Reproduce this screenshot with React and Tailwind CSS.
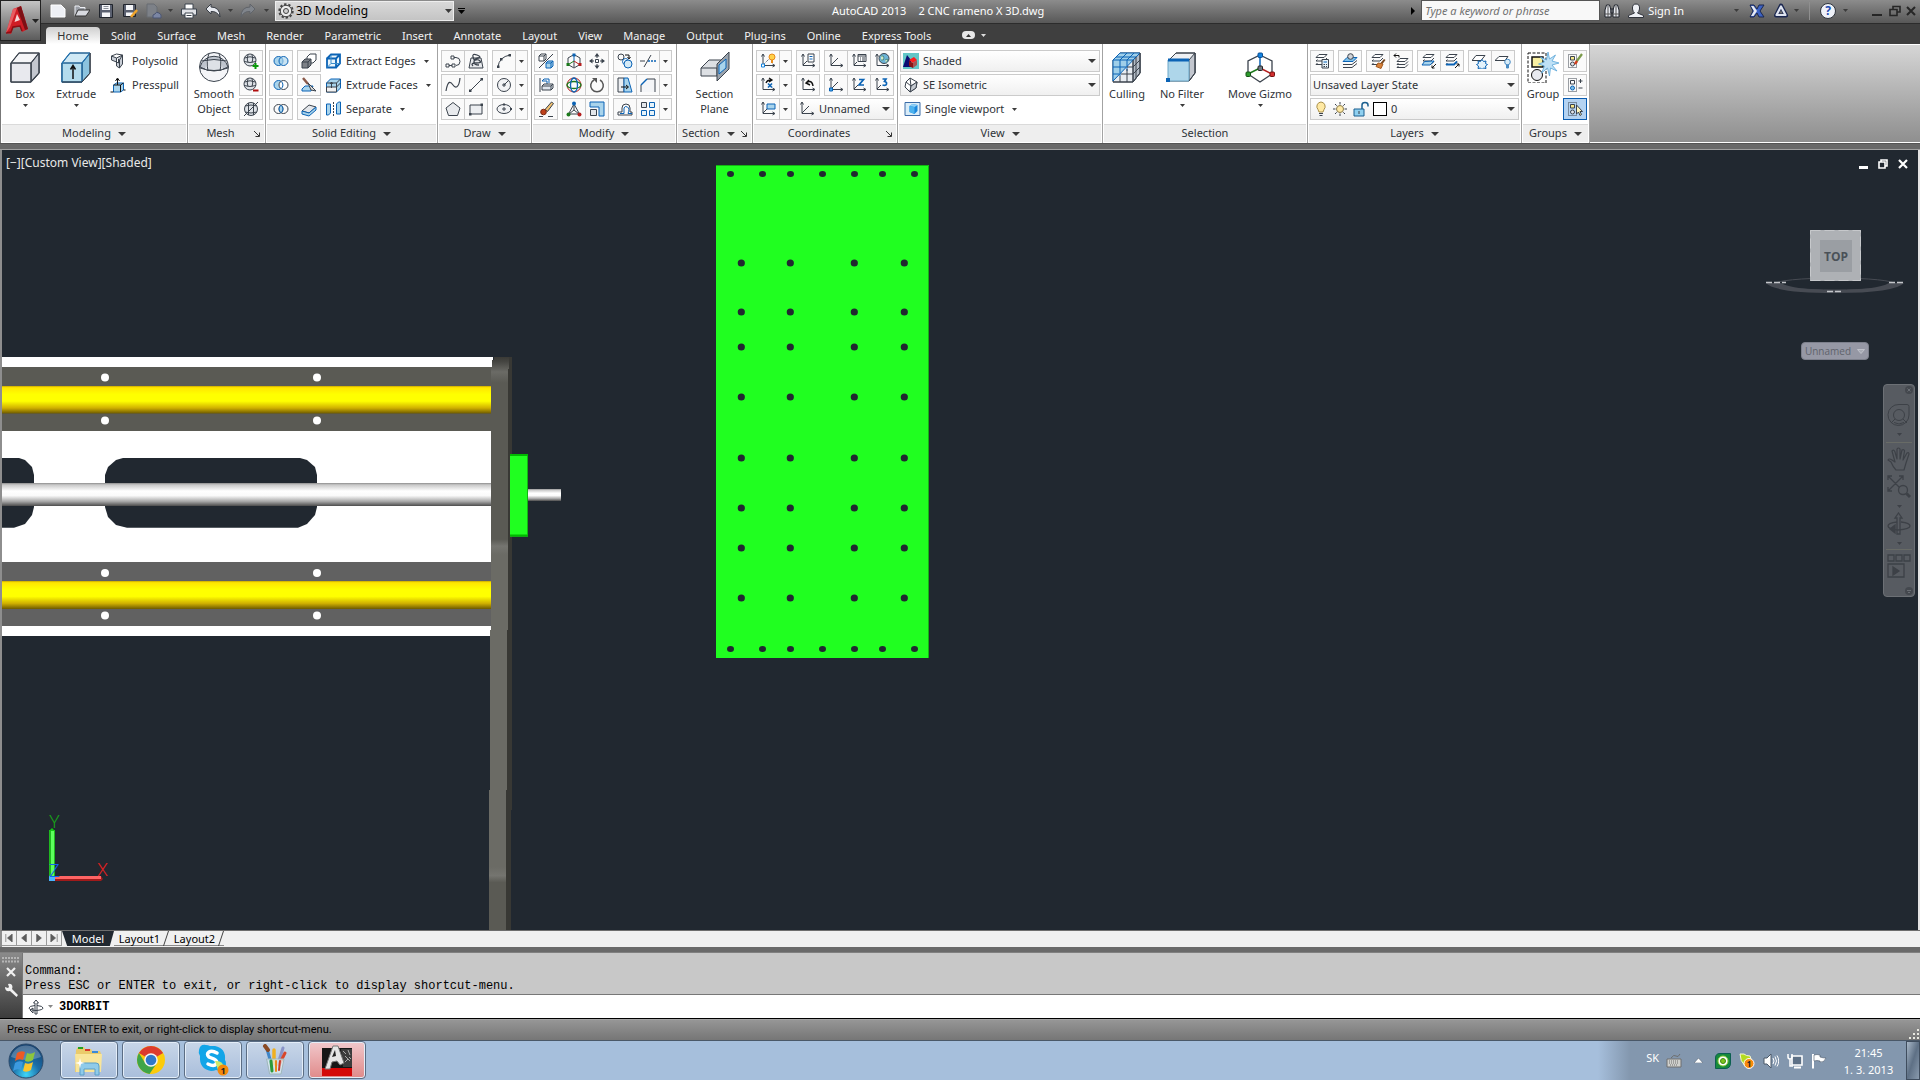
import React from 'react';

const INK = '#3b434d';
const BLUE = '#0b63b5';
const SKY = '#a9d4ec';

/* ---------- shared bits ---------- */

function Caret({ className = 'w-[7px] h-1 text-[#3a3a3a]' }) {
  return (
    <svg viewBox="0 0 8 4" preserveAspectRatio="none" className={`shrink-0 ${className}`} fill="currentColor">
      <path d="M0 0h8L4 4z" />
    </svg>
  );
}

function Icon({ children, className = 'w-4 h-4', box = 16 }) {
  return (
    <svg viewBox={`0 0 ${box} ${box}`} className={`shrink-0 ${className}`} fill="none" stroke={INK} strokeWidth="1">
      {children}
    </svg>
  );
}

const ucs = <path d="M3 1.500V12.500H14.500M1.500 3.500L3 1l1.500 2.500M12.500 11l2.500 1.500-2.500 1.500" />;
const dots = <rect x="1.500" y="1.500" width="8" height="13" strokeDasharray="1 1" />;
const layerStack = (
  <>
    <path d="M5 1.500h8l-3 3H2z" fill="#fff" />
    <path d="M3.500 6.500L2 8h8l3-3M3.500 10L2 11.500h8l3-3" />
  </>
);

const glyphs = {
  polysolid: (
    <>
      <path d="M2 3l5 2v4L2 7zM7 5l6-3v9l-3 4-3-2V9l2 1V6" fill="#c9ced6" />
      <path d="M2 3l5-2 6 1M10 15V7l3-5" />
    </>
  ),
  presspull: (
    <>
      <path d="M4 8l3-2h7v7l-3 2H4z" fill={SKY} stroke={BLUE} />
      <path d="M4 8h7v7M11 8l3-2M1 15h3M14 13h2M8 8V2M6 4l2-3 2 3" stroke="#111" />
    </>
  ),
  meshMore: (
    <>
      <circle cx="7" cy="7" r="6" fill="#dfe3e8" />
      <path d="M1.500 5q5.500-2.500 11 0M1 8.500q6 2 12 0M5 1.500q-1.500 5 0 8M9 1.500q1.500 5 0 8" />
      <path d="M12.500 10v6M9.500 13h6" stroke="#0a9a0a" strokeWidth="2" />
    </>
  ),
  meshLess: (
    <>
      <circle cx="7" cy="7" r="6" fill="#dfe3e8" />
      <path d="M1.500 5q5.500-2.500 11 0M1 8.500q6 2 12 0M5 1.500q-1.500 5 0 8M9 1.500q1.500 5 0 8" />
      <path d="M10 13.500h5.500" stroke="#b00c0c" strokeWidth="2" />
    </>
  ),
  refine: (
    <>
      <circle cx="8" cy="8" r="6.500" fill="#dfe3e8" />
      <path d="M1 15L15 1M2 5q6-2 12 0M2 11q6 2 12 0M5.500 2v12M10.500 2v12" />
    </>
  ),
  union: (
    <>
      <circle cx="5.500" cy="8" r="4.500" fill={SKY} stroke={BLUE} />
      <circle cx="10.500" cy="8" r="4.500" fill={SKY} fillOpacity=".6" stroke={BLUE} />
    </>
  ),
  subtract: (
    <>
      <circle cx="5.500" cy="8" r="4.500" fill={SKY} stroke={BLUE} />
      <circle cx="10.500" cy="8" r="4.500" fill="#fff" stroke={INK} />
      <path d="M8 4.300a4.500 4.500 0 0 1 0 7.400" stroke={BLUE} />
    </>
  ),
  intersect: (
    <>
      <circle cx="5.500" cy="8" r="4.500" />
      <circle cx="10.500" cy="8" r="4.500" />
      <path d="M8 4.300a4.500 4.500 0 0 1 0 7.400a4.500 4.500 0 0 1 0-7.400" fill={SKY} stroke={BLUE} />
    </>
  ),
  interfere: (
    <>
      <path d="M6 4l3-3h6v6l-3 3H6z" fill="#fff" />
      <path d="M1 9l3-3h6v6l-3 3H1z" fill="#7d8187" />
      <path d="M1 9h6v6M7 9l3-3" />
    </>
  ),
  slice: (
    <>
      <path d="M1 12l3-3h8l-2 5H1z" fill={SKY} stroke={BLUE} />
      <path d="M2 1l5 6" stroke="#8a5a4a" strokeWidth="2.500" />
      <path d="M7 6l8 8-5-1z" fill="#ddd" />
    </>
  ),
  thicken: (
    <>
      <path d="M1 10l7-6 7 2-7 6z" fill="#e3e6ea" />
      <path d="M1 10v3l7 2 7-6V6l-7 6z" fill={SKY} stroke={BLUE} />
    </>
  ),
  extractEdges: (
    <>
      <path d="M1.500 5.500h9v9h-9zM1.500 5.500l4-4h9v9l-4 4M10.500 5.500l4-4" fill="#eaf5fb" stroke={BLUE} strokeWidth="1.800" />
      <path d="M5.500 2v8.500H14M5.500 10.500l-4 4" stroke="#3d8ecb" />
    </>
  ),
  extrudeFaces: (
    <>
      <path d="M1 6l4-4h10v9l-4 4H1z" fill={SKY} stroke={BLUE} />
      <path d="M1 10h10v5H1z" fill="#f1f1f1" />
      <path d="M1 6h10v9M11 6l4-4M11 10l4-4M6 11V5M4.500 7L6 5l1.500 2" />
    </>
  ),
  separate: (
    <>
      <path d="M1 3h4v9l-2 2H1zM11 3l2-2h2v12h-4z" fill={SKY} stroke={BLUE} />
      <path d="M8 1v14" strokeDasharray="2 1" />
    </>
  ),
  polyline: (
    <>
      <path d="M2.500 12.500h6M8 4.500h3a4 4 0 0 1 0 8" />
      <path d="M1 11h3v3H1zM7 11h3v3H7zM6 3h3v3H6z" fill="#fff" />
    </>
  ),
  helix: (
    <>
      <path d="M3 5h10l2 10H1z" fill="#e8eaed" />
      <path d="M5 13q-3-3 3-3t4-2-4-1-3-3 4-2 1 3-4 4 5 3" strokeWidth="1.300" />
    </>
  ),
  arc: (
    <>
      <path d="M2 14Q3 4 14 2" />
      <path d="M1 12.500h2.500V15H1zM4 5h2.500v2.500H4zM12.500 1H15v2.500h-2.500z" fill={INK} stroke="none" />
    </>
  ),
  spline: <path d="M1 14C3 2 6 5 8 8s6 4 7-7" strokeWidth="1.200" />,
  line: (
    <>
      <path d="M2 14L14 2" />
      <path d="M1 12.500h2.500V15H1zM12.500 1H15v2.500h-2.500z" fill={INK} stroke="none" />
    </>
  ),
  circle: (
    <>
      <circle cx="8" cy="8" r="6.500" fill="#f2f3f5" />
      <path d="M8 8l4.500-4.500M6 8h4M8 6v4" />
    </>
  ),
  polygon: <path d="M8 1.500l7 5.500-2.500 7.500h-9L1 7z" fill="#e8eaed" />,
  rectangle: (
    <>
      <path d="M2 4h12v9H2z" fill="#eceef1" />
      <path d="M1 12h2.500v2.500H1zM12.500 2.500H15V5h-2.500z" fill={INK} stroke="none" />
    </>
  ),
  ellipse: (
    <>
      <ellipse cx="8" cy="8" rx="7" ry="4.500" fill="#f2f3f5" />
      <path d="M6 8h4M8 6v4" />
      <path d="M7 2.500h2v2H7zM14 7h2v2h-2z" fill={INK} stroke="none" />
    </>
  ),
  convert: (
    <>
      <path d="M1 3l2-2h5v5L6 8H1zM1 3h5v5M6 3l2-2" fill="#fff" />
      <path d="M8 10l2-2h5v5l-2 2H8zM8 10h5v5M13 10l2-2" fill={SKY} stroke={BLUE} />
      <path d="M1 15L15 1" />
    </>
  ),
  align3d: (
    <>
      <path d="M2 1v14" />
      <path d="M4 4l2-2h5v4M4 4h5v3" stroke={BLUE} />
      <path d="M4 9l2-2h9v4l-2 2H4zM4 9h9v4M13 9l2-2" fill="#dfe6ee" />
    </>
  ),
  erase: (
    <>
      <path d="M13.500 1l2 1.500-6 8-2.500-2z" fill="#f0c070" />
      <circle cx="5.500" cy="11" r="2.800" fill="#c0411c" stroke="#7a2a12" />
      <path d="M1 15.500h4M10 15.500h5" />
    </>
  ),
  move3d: (
    <>
      <path d="M8 1.500l6 3.500v6.500L8 15l-6-3.500V5zM8 8v6" />
      <path d="M8 8V2" stroke={BLUE} />
      <path d="M8 8l5.500 3.500" stroke="#b51f1f" />
      <path d="M8 8l-5.500 3.500" stroke="#1c7a1c" />
      <path d="M6.500 0.500h3v3h-3z" fill={BLUE} stroke="none" />
      <path d="M0.500 10h3v3h-3z" fill="#1c7a1c" stroke="none" />
      <path d="M12.500 10h3v3h-3z" fill="#b51f1f" stroke="none" />
    </>
  ),
  move: (
    <>
      <path d="M6.500 6.500h3v3h-3z" />
      <path d="M8 0l2.500 3.500h-5zM8 16l2.500-3.500h-5zM0 8l3.500-2.500v5zM16 8l-3.500-2.500v5z" fill={INK} stroke="none" />
      <path d="M8 3v2M8 11v2M3 8h2M11 8h2" />
    </>
  ),
  rotate3d: (
    <>
      <circle cx="8" cy="8" r="7" stroke="#b51f1f" />
      <ellipse cx="8" cy="8" rx="7" ry="3.500" stroke="#1c7a1c" strokeWidth="1.300" />
      <ellipse cx="8" cy="8" rx="3.500" ry="7" stroke={BLUE} strokeWidth="1.300" />
    </>
  ),
  rotate: (
    <>
      <path d="M11 3A6.300 6.300 0 1 1 5 3" strokeWidth="1.500" stroke="#555" />
      <path d="M3 1h5v5z" fill="#555" stroke="none" />
    </>
  ),
  scale3d: (
    <>
      <path d="M8 3L2.500 13h11z" />
      <path d="M8 2v7M8 9l-5 4M8 9l5 4" />
      <circle cx="8" cy="2.500" r="2" fill={BLUE} stroke="none" />
      <circle cx="2.500" cy="13.500" r="2" fill="#1c7a1c" stroke="none" />
      <circle cx="13.500" cy="13.500" r="2" fill="#b51f1f" stroke="none" />
    </>
  ),
  scale: (
    <>
      <path d="M1 1h14v14h-5V6H1z" fill={SKY} stroke={BLUE} />
      <path d="M1.500 8.500h6v6h-6z" fill="#e3e6ea" />
    </>
  ),
  copy: (
    <>
      <circle cx="4" cy="4" r="3" />
      <path d="M8 2h4v3M10.500 4L12 6l1.500-2" stroke="#111" />
      <circle cx="8.500" cy="8.500" r="3" stroke={BLUE} />
      <circle cx="11" cy="11" r="4" fill="#d5eaf6" stroke={BLUE} />
    </>
  ),
  trim: (
    <>
      <path d="M0 8h5M4 14L11 2" />
      <path d="M8 8h8" stroke={BLUE} strokeDasharray="2 1" strokeWidth="1.400" />
    </>
  ),
  stretch: (
    <>
      <path d="M1 1h6v14H1z" fill="#eceef1" />
      <path d="M7 1h4l4 14H7z" fill={SKY} stroke={BLUE} />
      <path d="M4 10h7M9 8l2.500 2L9 12" stroke="#111" />
    </>
  ),
  fillet: (
    <>
      <path d="M1 15V8l6-6h8v13" fill="#f4f5f7" />
      <path d="M1 8l6-6" stroke={BLUE} strokeWidth="1.400" />
    </>
  ),
  offset: (
    <>
      <path d="M1 14v-3h4V7a4 4 0 0 1 8 0v4h2v3z" />
      <path d="M3 12.500h4V7q1-2.500 3.500-1T11 12.500h4" stroke={BLUE} />
    </>
  ),
  array: (
    <>
      <path d="M1.500 1.500h5v5h-5z" fill="#e3e6ea" />
      <path d="M9.500 1.500h5v5h-5zM1.500 9.500h5v5h-5zM9.500 9.500h5v5h-5z" fill="#e6f3fa" stroke={BLUE} />
    </>
  ),
  ucsGizmo: (
    <>
      {ucs}
      <path d="M3 12l6-6" strokeDasharray="1 1" />
      <circle cx="12" cy="4" r="3" fill="#ffd24a" stroke="#e88a1a" />
      <path d="M11 7h2v3h-2z" fill="#e88a1a" stroke="none" />
      <path d="M1.500 11h3v3h-3z" fill="#fff" stroke="#1182e0" />
    </>
  ),
  ucsX: (
    <>
      {ucs}
      <path d="M6 6q1-3 5-3M9 1l3 2-3 2" stroke="#111" strokeWidth="1.300" />
      <path d="M8 6.500l4 4M12 6.500l-4 4" stroke={BLUE} strokeWidth="1.600" />
    </>
  ),
  ucsView: (
    <>
      {ucs}
      <path d="M7 3h8v5H7z" fill={SKY} stroke={BLUE} />
      <path d="M3 12l4-4" />
    </>
  ),
  ucsNamed: (
    <>
      {ucs}
      <path d="M8 1h6v8H8z" fill="#fff" />
      <path d="M9.500 3.500h3M9.500 6h3" stroke={BLUE} />
      <path d="M3 12l4-4" />
    </>
  ),
  ucsPrev: (
    <>
      {ucs}
      <path d="M6 6q6-4 7 3M9 3L6 6l4 2" stroke="#111" strokeWidth="1.400" />
    </>
  ),
  ucsWorldAxis: (
    <>
      {ucs}
      <path d="M3 12l7-7" />
    </>
  ),
  ucsList: (
    <>
      {ucs}
      <path d="M7 1.500h8v7H7z" fill="#fff" />
      <path d="M7 3h8M9 5h1M11 5h3M9 7h1M11 7h3M3 12l3-3" />
    </>
  ),
  ucsGlobe: (
    <>
      {ucs}
      <circle cx="10" cy="5.500" r="5" fill="#6cb4d8" />
      <path d="M7 3q3-1 3 2t-3 2M11 7q3-2 3 0l-2 3" fill="#cfe8c8" stroke="#4b8e87" />
    </>
  ),
  ucsOrigin: (
    <>
      {ucs}
      <path d="M3 12l7-7" />
      <path d="M1.500 11h3v3h-3z" fill="#49a7ee" stroke={BLUE} />
    </>
  ),
  ucsZ: (
    <>
      {ucs}
      <path d="M8 2.500h4.500L8 8h5" stroke={BLUE} strokeWidth="1.700" />
      <path d="M3 12l4-4" />
    </>
  ),
  ucs3: (
    <>
      {ucs}
      <path d="M8.500 2h3.500L10.500 4.500Q13 5 12.500 7T8.500 8" stroke={BLUE} strokeWidth="1.700" />
      <path d="M3 12l4-4" />
    </>
  ),
  shaded: (
    <>
      <rect width="16" height="16" fill="#62c7c7" stroke="none" />
      <path d="M0 14L4 2l4 5v7z" fill="#0b0b72" stroke="none" />
      <path d="M6 8l4 2v5l-4-2z" fill="#8b1515" stroke="none" />
      <path d="M6 7l5-3 3 3-4 3z" fill="#ff1c1c" stroke="none" />
      <path d="M10 10l4-3v5l-4 3z" fill="#a65252" stroke="none" />
    </>
  ),
  iso: (
    <>
      <path d="M7 1l7 4-1 6-6 4-5-5 1-5z" fill="#fff" />
      <path d="M3 5l5 4 6-4M8 9l-1 6M7 1l1 8" />
      <path d="M8 9l6-4-1 6-6 4z" fill="#c6cbd2" />
    </>
  ),
  viewport: (
    <>
      <path d="M0.500 1.500h15v13H0.500z" fill="#d9ecf8" stroke="#3b6ca8" />
      <path d="M5 5l3-2 5 1v6l-3 3-5-2z" fill="#1b86dc" stroke="none" />
      <path d="M5 5l5 1 3-2-5-1z" fill="#8fd1f7" stroke="none" />
      <path d="M5 5l5 1v7l-5-2z" fill="#4cb2ee" stroke="none" />
    </>
  ),
  layerProps: (
    <>
      {layerStack}
      <path d="M8 6.500h6.500V15H8z" fill="#e9f4fb" />
      <path d="M9.500 9h3.500" stroke={BLUE} />
      <path d="M9.500 11.500h1.500M12 11.500h1M9.500 13.500h1.500M12 13.500h1" />
    </>
  ),
  layerState: (
    <>
      <path d="M1 14.500h9l5-4M1 11.500h9l5-4" />
      <path d="M1 8.500l4-4h10l-4 4z" fill="#7fc1ea" stroke={BLUE} />
      <circle cx="8.500" cy="3.500" r="2.800" fill="#cfd3d8" />
    </>
  ),
  layerMatch: (
    <>
      {layerStack}
      <path d="M14 6l1.500 1-3 4-2-1z" fill="#7a4a22" stroke="none" />
      <path d="M8 10l5 1-2 4.500-5-2z" fill="#d9823a" stroke="#a35a1e" />
    </>
  ),
  layerPrev: (
    <>
      <path d="M7 5.500h8l-3 3H4z" fill="#fff" />
      <path d="M5.500 10L4 11.500h8l3-3M5.500 13L4 14.500h8l3-3" />
      <path d="M1 2.500h5v2M3 0.500L1 2.500l2 2" stroke="#111" />
    </>
  ),
  layerDown: (
    <>
      {layerStack}
      <path d="M3.500 8.500L1 12h8l4-4z" fill={SKY} stroke={BLUE} />
      <path d="M15 11l-4 4M11 12.500V15h2.500" stroke="#111" />
    </>
  ),
  layerUp: (
    <>
      {layerStack}
      <path d="M2 11.500h8l3-3" stroke={BLUE} strokeWidth="1.800" />
      <path d="M11 15l4-4M12.500 11H15v2.500" stroke="#111" />
    </>
  ),
  layerFreeze: (
    <>
      <path d="M4 2.500h9l-4 5H0z" fill="#fff" />
      <path d="M10 6.500l1.500 2 2.500-.5-.5 2.500 2 1-2 1.500.5 2.500-2.500-.5-1.500 1.500-1.500-1.500-2.500.5.500-2.500-2-1.500 2-1-.5-2.500 2.500.5z" fill="#e3f2fb" stroke={BLUE} />
    </>
  ),
  layerOff: (
    <>
      <path d="M4 3.500h9l-3 4H0z" fill="#fff" />
      <circle cx="12.500" cy="9" r="2.800" fill="#d8ecf8" stroke="#4a8cc4" />
      <path d="M11.500 12h2v3h-2z" fill="#4a8cc4" stroke="#4a8cc4" />
    </>
  ),
  bulb: (
    <>
      <path d="M8 1a4.500 4.500 0 0 1 3 7.500L10 11H6L5 8.500A4.500 4.500 0 0 1 8 1z" fill="#ffe9a3" stroke="#a9904a" />
      <path d="M6 12.500h4M6.500 14.500h3" />
    </>
  ),
  sun: (
    <>
      <circle cx="8" cy="8" r="3.500" fill="#ffe9a3" stroke="#8a7a4a" />
      <path d="M8 1v2.500M8 12.500V15M1 8h2.500M12.500 8H15M3 3l1.700 1.700M11.300 11.300L13 13M3 13l1.700-1.700M11.300 4.700L13 3" />
    </>
  ),
  lock: (
    <>
      <path d="M1 8h10v7H1z" fill="#8fd0f0" stroke="#1b5f8f" />
      <path d="M9 8V4q0-2.500 3-2.500t3 2.500v1.500" stroke="#1b5f8f" strokeWidth="1.500" />
      <path d="M6 10v3" />
    </>
  ),
  groupEdit: (
    <>
      {dots}
      <path d="M3.500 3.500h4v3.500h-4z" fill="#f7e88a" />
      <circle cx="5.500" cy="11" r="2" fill="#dfe3e8" />
      <path d="M15 1L9.500 8.500" stroke="#7a9a4a" strokeWidth="2.200" />
      <path d="M10 8L8 11" stroke="#d23c1a" strokeWidth="2.400" />
    </>
  ),
  groupAdd: (
    <>
      {dots}
      <path d="M3.500 3.500h4v3.500h-4z" fill="#fff" />
      <circle cx="5.500" cy="11" r="2" fill="#7fc1ea" stroke={BLUE} />
      <path d="M11.500 4h4M13.500 2v4M11.500 11h4" />
    </>
  ),
  groupPick: (
    <>
      {dots}
      <path d="M3.500 3.500h4v3.500h-4z" fill="#f7e88a" />
      <circle cx="5.500" cy="11" r="2" fill="#dfe3e8" />
      <path d="M9.500 4v9l2-2 1.500 3.500 1.500-1-1.500-3H15.500z" fill="#fff6c0" />
    </>
  ),
};

const bigGlyphs = {
  box: (
    <>
      <path d="M2 12l8-10h20v20l-8 9H2z" fill="#f4f5f7" />
      <path d="M22 12l8-10v20l-8 9z" fill="#c3c7cf" />
      <path d="M2 12h20v19H2z" fill="#e8e9ee" />
      <path d="M2 12l8-10h20v20l-8 9H2zM2 12h20v19M22 12l8-10" strokeWidth="1.200" />
    </>
  ),
  extrude: (
    <>
      <path d="M2 12l8-10h20v20l-8 9H2z" fill="#cfe9f5" />
      <path d="M22 12l8-10v20l-8 9z" fill="#8cc3de" />
      <path d="M2 12h20v19H2z" fill="#b4dced" />
      <path d="M2 12l8-10h20M2 12h20v19M22 12l8-10M2 12v19h20" stroke="#1a74b8" strokeWidth="1.200" />
      <path d="M2 31h20l8-9V2" />
      <path d="M13 28V15M10.500 18.500l2.500-4 2.500 4" stroke="#111" strokeWidth="1.500" />
    </>
  ),
  smooth: (
    <>
      <circle cx="16" cy="16" r="14.500" fill="#f4f5f8" />
      <path d="M2 16A14.500 14.500 0 0 1 30 16Q16 24 2 16z" fill="#bfc5ce" />
      <path d="M9 9h14l2 10H7z" fill="#dde1e6" stroke="none" />
      <path d="M3 10q13-3 26 0M2 17q14 5 28 0M11 2.500Q8 10 10 20M21 2.500Q24 10 22 20" />
    </>
  ),
  section: (
    <>
      <path d="M2 17l8-8h14v12l-5 4H2z" fill="#dde0e4" />
      <path d="M2 17h16M18 17v8" />
      <path d="M18 13L30 1v17L18 30z" fill="#9aa3ad" />
      <path d="M20 14l7-6v9l-7 6z" fill={SKY} stroke={BLUE} />
    </>
  ),
  culling: (
    <>
      <path d="M2 9l7-7h20v20l-7 9H2z" fill="#e9edf2" />
      <path d="M22 9l7-7v20l-7 9z" fill="#b5bdc7" />
      <path d="M2 30V9l7-7h20L2 30z" fill="#9fcfe9" stroke={BLUE} />
      <path d="M2 9h20M9 9v16M16 9v11M22 9l7-7M2 16h13M2 23h6M9 9l7-7M16 9l7-7M5 6h20" stroke={BLUE} />
      <path d="M22 9v22H2M9 25v6M16 18v13M22 16l7-7M22 23l7-7M10 23h12M16 16h6M25 6v21M29 2v20l-7 9" />
    </>
  ),
  filter: (
    <>
      <path d="M3 9l7-7h19v20l-6 8H3z" fill="#eef0f3" />
      <path d="M23 9l6-7v20l-6 8z" fill="#c3c7cf" />
      <path d="M2 9h21v21H2z" fill="#aed6ea" stroke="#6aa6c8" />
      <path d="M2 7.500h21v3H2zM0 27h4v4H0z" fill={BLUE} stroke="none" />
      <path d="M10 2h19v20l-6 8" />
    </>
  ),
  gizmo: (
    <>
      <path d="M16 4l12 6v13l-12 8-12-8V10z" strokeWidth="1.300" />
      <path d="M16 17V4" stroke={BLUE} strokeWidth="1.500" />
      <path d="M16 17L4 23" stroke="#1c7a1c" strokeWidth="1.500" />
      <path d="M16 17l12 6" stroke="#b51f1f" strokeWidth="1.500" />
      <rect x="14" y="2" width="4.500" height="4.500" rx="1" fill="#1182e0" stroke="#0a4f95" />
      <rect x="2" y="21" width="4.500" height="4.500" rx="1" fill="#2c9a2c" stroke="#145214" />
      <rect x="26" y="21" width="4.500" height="4.500" rx="1" fill="#d22f2f" stroke="#731010" />
      <rect x="14" y="15" width="4.500" height="4.500" rx="1" fill="#707a84" stroke="#222" />
    </>
  ),
  group: (
    <>
      <rect x="1" y="2" width="18" height="30" stroke="#111" strokeDasharray="3 1.500" />
      <path d="M5 6h11v10H5z" fill="#f8efa2" stroke="#111" strokeWidth="1.500" />
      <circle cx="10" cy="24" r="5.500" fill="#e8eaf0" stroke="#111" />
      <path d="M21 1l1.500 7 6-4-3.500 6 7 2-7 2 5 6-6.500-3-1 8-2-8-6 5 3-7-6-2 6-2-4-5 6 3z" fill="#bfe1f6" stroke="#5aa6d8" strokeWidth=".8" />
    </>
  ),
};

/* ---------- ribbon controls ---------- */

function Cell({ name, label, active = false }) {
  return (
    <button
      aria-label={label || name}
      className={`w-6 h-[22px] flex items-center justify-center border ${active ? 'border-[#0a5cb0] bg-[#b4d3f2]' : 'border-[#cbcbcb] bg-[#fafafa]'}`}
    >
      <Icon>{glyphs[name]}</Icon>
    </button>
  );
}

function Cells({ names, more = false }) {
  return (
    <div className="flex">
      {names.map((n, i) => (
        <div key={n} className={i > 0 ? '-ml-px flex' : 'flex'}>
          <Cell name={n} />
        </div>
      ))}
      {more && (
        <button aria-label="More" className="-ml-px w-[13px] h-[22px] flex items-center justify-center border border-[#cbcbcb] bg-[#fafafa]">
          <Caret className="w-[5px] h-[3px] text-[#3a3a3a]" />
        </button>
      )}
    </div>
  );
}

function Big({ name, lines, more = false, className = '' }) {
  return (
    <button className={`flex flex-col items-center shrink-0 ${className}`}>
      <Icon box={32} className="w-8 h-8 mb-[3px]">{bigGlyphs[name]}</Icon>
      {lines.map((l) => (
        <span key={l} className="leading-[15px] whitespace-nowrap">{l}</span>
      ))}
      {more && <Caret className="w-[5px] h-[3px] mt-[3px] text-[#3a3a3a]" />}
    </button>
  );
}

function Labeled({ name, text, more = false, gap = 'gap-1' }) {
  return (
    <button className={`h-[22px] flex items-center whitespace-nowrap ${gap}`}>
      <Icon className="w-[17px] h-4">{glyphs[name]}</Icon>
      <span>{text}</span>
      {more && <Caret className="w-[5px] h-[3px] ml-1 text-[#3a3a3a]" />}
    </button>
  );
}

function Combo({ label, value, children, pad = 'pl-[22px]' }) {
  return (
    <div className="relative h-[22px] w-full">
      <select
        aria-label={label}
        defaultValue={value}
        className={`appearance-none w-full h-full border border-[#cbcbcb] bg-gradient-to-b from-white to-[#f0f0f0] outline-none ${pad}`}
      >
        <option>{value}</option>
      </select>
      <span className="absolute inset-y-0 left-[3px] flex items-center gap-px pointer-events-none">{children}</span>
      <span className="absolute inset-y-0 right-[4px] flex items-center pointer-events-none">
        <Caret className="w-2 h-1 text-[#3a3a3a]" />
      </span>
    </div>
  );
}

function Panel({ title, width, children, more = false, launcher = false }) {
  return (
    <section className={`flex flex-col shrink-0 border-r border-[#a3a3a3] px-px pb-px ${width}`}>
      <div className="flex-1 flex items-start pt-1.5">{children}</div>
      <div className={`relative h-[18px] flex items-center justify-center gap-[7px] bg-[#eeeeee] border-t border-[#dadada] ${launcher ? 'pr-3' : ''}`}>
        <span>{title}</span>
        {more && <Caret className="w-2 h-1 text-[#3a3a3a]" />}
        {launcher && (
          <svg viewBox="0 0 6 6" className="absolute right-1 top-1.5 w-[6px] h-[6px]" stroke="#333" fill="none">
            <path d="M0 0l5 5M5.500 1.500v4h-4" />
          </svg>
        )}
      </div>
    </section>
  );
}

const Rows = ({ children, className = '' }) => <div className={`flex flex-col gap-0.5 ${className}`}>{children}</div>;
const Row = ({ children }) => <div className="flex gap-1">{children}</div>;

function Ribbon() {
  return (
    <div className="flex h-[99px] bg-white border-l border-[#777] text-[#2f3338] text-[11px]">
      <Panel title="Modeling" more width="w-[187px]">
        <Big name="box" lines={['Box']} more className="w-[46px] pt-px" />
        <Big name="extrude" lines={['Extrude']} more className="w-[56px] pt-px" />
        <Rows className="pl-[5px]">
          <Labeled name="polysolid" text="Polysolid" gap="gap-1.5" />
          <Labeled name="presspull" text="Presspull" gap="gap-1.5" />
        </Rows>
      </Panel>
      <Panel title="Mesh" launcher width="w-[78px]">
        <Big name="smooth" lines={['Smooth', 'Object']} className="w-[50px] pt-px" />
        <Rows>
          <Cell name="meshMore" />
          <Cell name="meshLess" />
          <Cell name="refine" />
        </Rows>
      </Panel>
      <Panel title="Solid Editing" more width="w-[172px]">
        <Rows className="pl-0.5">
          <Row><Cell name="union" /><Cell name="interfere" /></Row>
          <Row><Cell name="subtract" /><Cell name="slice" /></Row>
          <Row><Cell name="intersect" /><Cell name="thicken" /></Row>
        </Rows>
        <Rows className="pl-1">
          <Labeled name="extractEdges" text="Extract Edges" more />
          <Labeled name="extrudeFaces" text="Extrude Faces" more />
          <Labeled name="separate" text="Separate" more />
        </Rows>
      </Panel>
      <Panel title="Draw" more width="w-[94px]">
        <Rows className="pl-0.5">
          <Row><Cells names={['polyline', 'helix']} /><Cells names={['arc']} more /></Row>
          <Row><Cells names={['spline', 'line']} /><Cells names={['circle']} more /></Row>
          <Row><Cells names={['polygon', 'rectangle']} /><Cells names={['ellipse']} more /></Row>
        </Rows>
      </Panel>
      <Panel title="Modify" more width="w-[145px]">
        <Rows className="pl-px">
          <Row><Cell name="convert" /><Cells names={['move3d', 'move']} /><Cells names={['copy', 'trim']} more /></Row>
          <Row><Cell name="align3d" /><Cells names={['rotate3d', 'rotate']} /><Cells names={['stretch', 'fillet']} more /></Row>
          <Row><Cell name="erase" /><Cells names={['scale3d', 'scale']} /><Cells names={['offset', 'array']} more /></Row>
        </Rows>
      </Panel>
      <Panel title="Section" more launcher width="w-[76px]">
        <Big name="section" lines={['Section', 'Plane']} className="w-full pt-px" />
      </Panel>
      <Panel title="Coordinates" launcher width="w-[145px]">
        <Rows className="pl-0.5">
          <Row><Cells names={['ucsGizmo']} more /><Cell name="ucsNamed" /><Cells names={['ucsWorldAxis', 'ucsList', 'ucsGlobe']} /></Row>
          <Row><Cells names={['ucsX']} more /><Cell name="ucsPrev" /><Cells names={['ucsOrigin', 'ucsZ', 'ucs3']} /></Row>
          <Row>
            <Cells names={['ucsView']} more />
            <div className="flex-1"><Combo label="Named UCS" value="Unnamed"><Icon>{glyphs.ucsWorldAxis}</Icon></Combo></div>
          </Row>
        </Rows>
      </Panel>
      <Panel title="View" more width="w-[205px]">
        <Rows className="w-full px-px">
          <Combo label="Visual style" value="Shaded"><Icon>{glyphs.shaded}</Icon></Combo>
          <Combo label="View" value="SE Isometric"><Icon>{glyphs.iso}</Icon></Combo>
          <div className="pl-1"><Labeled name="viewport" text="Single viewport" more /></div>
        </Rows>
      </Panel>
      <Panel title="Selection" width="w-[205px]">
        <Big name="culling" lines={['Culling']} className="w-[46px] pt-px" />
        <Big name="filter" lines={['No Filter']} more className="w-16 pt-px" />
        <Big name="gizmo" lines={['Move Gizmo']} more className="w-[92px] pt-px" />
      </Panel>
      <Panel title="Layers" more width="w-[214px]">
        <Rows className="w-full px-px">
          <Row>
            <Cell name="layerProps" />
            <Cell name="layerState" />
            <Cells names={['layerMatch', 'layerPrev']} />
            <Cells names={['layerDown', 'layerUp']} />
            <Cells names={['layerFreeze', 'layerOff']} />
          </Row>
          <Combo label="Layer state" value="Unsaved Layer State" pad="pl-0.5" />
          <Combo label="Layer" value="0" pad="pl-20">
            <Icon>{glyphs.bulb}</Icon>
            <Icon className="w-5 h-4">{glyphs.sun}</Icon>
            <Icon className="w-5 h-4">{glyphs.lock}</Icon>
            <span className="w-[14px] h-[14px] ml-px border border-black bg-white" />
          </Combo>
        </Rows>
      </Panel>
      <Panel title="Groups" more width="w-[68px]">
        <Big name="group" lines={['Group']} className="w-10 pt-px" />
        <Rows>
          <Cell name="groupEdit" />
          <Cell name="groupAdd" />
          <Cell name="groupPick" active />
        </Rows>
      </Panel>
      <div className="flex-1 border-y border-white bg-gradient-to-b from-[#d6d6d6] to-[#8f8f8f]" />
    </div>
  );
}

/* ---------- title bar ---------- */

const quick = {
  New: <path d="M1 2h10l4 4v8H1z" fill="#eef0f5" stroke="#fff" />,
  Open: (
    <>
      <path d="M1 13V3h4l1 1.500h5V7" fill="#9a9ea6" stroke="#eef0f5" />
      <path d="M1 13L4 7h12l-4 6z" fill="#d8dae0" stroke="#333" />
    </>
  ),
  Save: (
    <>
      <path d="M1.500 1.500h13v13h-13z" fill="#5a6070" stroke="#20242c" />
      <path d="M4 2h8v5H4zM4 9.500h8V14H4z" fill="#f4f5f8" stroke="none" />
      <path d="M5.500 3.500h5M5.500 5.500h5" stroke="#8a8f98" />
    </>
  ),
  'Save As': (
    <>
      <path d="M1.500 1.500h12v12h-12z" fill="#5a6070" stroke="#20242c" />
      <path d="M4 2h7v5H4zM4 9.500h7V13H4z" fill="#f4f5f8" stroke="none" />
      <path d="M15 7l-6 7" stroke="#f0a52c" strokeWidth="2.600" />
    </>
  ),
  Export: (
    <>
      <path d="M1 1h7l3 3v10H1z" fill="#7d8188" stroke="#686c73" />
      <path d="M7 15q-1-4 2-4 1-3 4-1 3 1 2 5z" fill="#7b86a4" stroke="#4a5470" />
    </>
  ),
};

const dimCaret = 'w-[5px] h-[3px] text-[#3c3c3c]';

function QuickButton({ label, children }) {
  return (
    <button aria-label={label} className="w-6 h-5 flex items-center justify-center">
      <Icon>{children}</Icon>
    </button>
  );
}

function TitleBar() {
  return (
    <div className="h-6 flex items-center bg-gradient-to-b from-[#8c8c8c] to-[#585858] border-b border-[#2c2c2c] text-white text-[11px]">
      <div className="flex items-center pl-[46px] pb-0.5">
        {Object.keys(quick).map((k) => (
          <QuickButton key={k} label={k}>{quick[k]}</QuickButton>
        ))}
        <Caret className={`${dimCaret} ml-0.5 mr-1`} />
        <QuickButton label="Plot">
          <path d="M4 6V1h8v5" fill="#fff" />
          <path d="M0.500 6h15v6h-15z" fill="#dfe1e6" />
          <path d="M4 10h8v5H4z" fill="#fff" />
          <path d="M5.500 12.500h5" />
        </QuickButton>
        <QuickButton label="Undo">
          <path d="M1 6l5-5v3q9 0 9 10-3-6-9-5.500V11z" fill="#e6e9ef" stroke="#3a3f47" />
        </QuickButton>
        <Caret className={`${dimCaret} mx-[3px]`} />
        <QuickButton label="Redo">
          <path d="M15 6l-5-5v3q-9 0-9 10 3-6 9-5.500V11z" fill="#80858c" stroke="#60646a" />
        </QuickButton>
        <Caret className={`${dimCaret} mx-1`} />
        <div className="relative w-[179px] h-5 ml-0.5">
          <select aria-label="Workspace" defaultValue="3D Modeling" className="appearance-none w-full h-full pl-5 bg-gradient-to-b from-[#d9d9d9] to-[#c4c4c4] border border-[#eee] text-black text-[12px] outline-none">
            <option>3D Modeling</option>
          </select>
          <svg viewBox="0 0 16 16" className="absolute left-[3px] top-0.5 w-4 h-4 pointer-events-none" fill="none" stroke="#444">
            <circle cx="8" cy="8" r="6.800" strokeDasharray="2.400 1.870" strokeWidth="1.800" />
            <circle cx="8" cy="8" r="5.700" fill="#ececec" />
            <circle cx="8" cy="8" r="2.500" fill="#d0d0d0" />
          </svg>
          <span className="absolute right-[2px] top-2 pointer-events-none"><Caret /></span>
        </div>
        <button aria-label="Customize quick access" className="flex flex-col items-center gap-px ml-1">
          <span className="w-[7px] h-px bg-black" />
          <Caret className="w-[7px] h-1 text-black" />
        </button>
      </div>
      <h1 className="flex-1 flex justify-center gap-3 whitespace-pre">
        <span>AutoCAD 2013</span>
        <span>2 CNC rameno X 3D.dwg</span>
      </h1>
      <div className="flex items-center shrink-0 pb-0.5">
        <svg viewBox="0 0 4 8" className="w-1 h-2 mr-1.5"><path d="M0 0l4 4-4 4z" /></svg>
        <input aria-label="Search" placeholder="Type a keyword or phrase" className="w-[179px] h-[21px] px-[3px] bg-[#f8f8f8] border border-[#555] italic placeholder:text-[#707070] text-black outline-none" />
        <button aria-label="Find" className="ml-1 flex">
          <Icon>
            <path d="M1 14V7l1.500-5h3L7 7v7zM9 14V7l1.500-5h3L15 7v7zM7 6h2v4H7z" fill="#e6e8ee" stroke="#20242c" />
            <path d="M1 11h6M9 11h6M4 3v11M12 3v11" stroke="#555" />
          </Icon>
        </button>
        <button className="ml-2 flex items-center gap-1">
          <Icon>
            <path d="M8 1q4 0 3.500 5-.5 3-2 4l6 2.500v2H.5v-2l6-2.500q-1.500-1-2-4Q4 1 8 1z" fill="#eef0f5" stroke="#30343c" />
          </Icon>
          <span className="pt-0.5">Sign In</span>
        </button>
        <Caret className={`${dimCaret} ml-[50px] mr-2.5`} />
        <button aria-label="Exchange" className="flex">
          <Icon>
            <path d="M1 2h4l3 4 2-4h5l-4 6 4 6h-5L8 10l-3 4H1l3-6z" fill="#3c62c4" stroke="#1b2750" />
            <path d="M2 3h2.500L8 8l-3.500 5H2l3-5z" fill="#e8ebf2" stroke="none" />
          </Icon>
        </button>
        <button aria-label="Stay connected" className="flex items-center gap-[5px] ml-2">
          <Icon>
            <path d="M8 2.500L13 12.500H3z" strokeWidth="4" stroke="#1b2750" strokeLinejoin="round" />
            <path d="M8 3.500L12.500 12H3.500z" strokeWidth="2.200" stroke="#dfe4f0" strokeLinejoin="round" />
          </Icon>
          <Caret className={dimCaret} />
        </button>
        <span className="w-px h-[18px] bg-[#8f8f8f] mx-2.5" />
        <button aria-label="Help" className="flex items-center gap-[7px]">
          <span className="w-4 h-4 rounded-full bg-[#eef1f8] border border-[#30343c] text-[#1c49b0] font-bold text-[12px] leading-[14px] text-center">?</span>
          <Caret className={dimCaret} />
        </button>
        <button aria-label="Minimize" className="ml-6 w-[17px] h-5 flex items-center">
          <span className="w-2.5 h-[2px] bg-[#262626] mt-2" />
        </button>
        <button aria-label="Restore" className="w-[17px] flex">
          <svg viewBox="0 0 12 12" className="w-3 h-3" fill="none" stroke="#262626" strokeWidth="1.600"><path d="M4 4V1.500h7V7H8M1 4.500h7v6H1z" /></svg>
        </button>
        <button aria-label="Close" className="w-[14px] flex">
          <svg viewBox="0 0 10 10" className="w-2.5 h-2.5" stroke="#262626" strokeWidth="2"><path d="M1 1l8 8M9 1L1 9" /></svg>
        </button>
      </div>
    </div>
  );
}

const tabs = ['Home', 'Solid', 'Surface', 'Mesh', 'Render', 'Parametric', 'Insert', 'Annotate', 'Layout', 'View', 'Manage', 'Output', 'Plug-ins', 'Online', 'Express Tools'];

function TabBar() {
  return (
    <nav className="h-5 flex items-end gap-px bg-[#3f3f3f] pl-[46px] text-[11px] text-[#f2f2f2]">
      {tabs.map((t) => (
        <button
          key={t}
          className={`h-[17px] leading-[15px] whitespace-nowrap ${t === 'Home' ? 'w-[54px] text-[#333] bg-gradient-to-b from-[#cfcfcf] to-white rounded-t-sm' : 'px-[10px]'}`}
        >
          {t}
        </button>
      ))}
      <button aria-label="Minimize ribbon" className="flex items-center gap-1.5 ml-5 mb-[5px]">
        <span className="w-[13px] h-2 rounded-sm bg-[#e8e8e8] flex items-center justify-center">
          <Caret className="w-[5px] h-[3px] rotate-180 text-[#333]" />
        </span>
        <Caret className="w-[5px] h-[3px] text-[#ddd]" />
      </button>
    </nav>
  );
}

/* ---------- model space ---------- */

const plateEdgeX = [730, 762, 790, 822, 854, 882, 914];
const plateX = [741, 790, 854, 904];
const plateY = [263, 312, 347, 397, 458, 508, 548, 598];

function Model() {
  return (
    <svg viewBox="2 150 1916 780" preserveAspectRatio="xMinYMin slice" className="absolute inset-0 w-full h-full">
      <defs>
        <linearGradient id="gold" x1="0" y1="0" x2="0" y2="1">
          <stop offset="0" stopColor="#c9a800" />
          <stop offset=".06" stopColor="#ffe600" />
          <stop offset=".3" stopColor="#ffff00" />
          <stop offset=".55" stopColor="#ffff00" />
          <stop offset=".8" stopColor="#d0b000" />
          <stop offset="1" stopColor="#6e5a00" />
        </linearGradient>
        <linearGradient id="steel" x1="0" y1="0" x2="0" y2="1">
          <stop offset="0" stopColor="#8c8c8c" />
          <stop offset=".08" stopColor="#c8c8c8" />
          <stop offset=".35" stopColor="#ffffff" />
          <stop offset=".55" stopColor="#fafafa" />
          <stop offset=".8" stopColor="#a8a8a8" />
          <stop offset="1" stopColor="#4c4c4c" />
        </linearGradient>
        <linearGradient id="post" gradientUnits="userSpaceOnUse" x1="0" y1="357" x2="0" y2="930">
          <stop offset="0" stopColor="#3a3a36" />
          <stop offset=".008" stopColor="#454541" />
          <stop offset=".026" stopColor="#6b6b66" />
          <stop offset=".045" stopColor="#5a5a54" />
          <stop offset=".318" stopColor="#5a5a54" />
          <stop offset=".33" stopColor="#757570" />
          <stop offset=".345" stopColor="#6b6b65" />
          <stop offset=".89" stopColor="#6b6b65" />
          <stop offset=".905" stopColor="#757570" />
          <stop offset=".917" stopColor="#5a5a54" />
          <stop offset="1" stopColor="#5a5a54" />
        </linearGradient>
      </defs>

      {/* rails and carriage plate */}
      <path d="M2 357H493V636H2z" fill="#fff" />
      <path d="M2 367H491V431H2z" fill="#5a5a54" />
      <path d="M2 562H491V626H2z" fill="#616161" />
      <rect x="2" y="386" width="489" height="27.500" fill="url(#gold)" />
      <rect x="2" y="581" width="489" height="28" fill="url(#gold)" />
      {[377.5, 420.5, 573, 615.5].map((y) => [105, 317].map((x) => <circle key={`${x}-${y}`} cx={x} cy={y} r="4" fill="#fff" />))}
      <path d="M123 458H300L307 460 315 467 317 475V507L315 515 307 524 298 527.700H127L116 525 108 517 105 507V475L108 467 116 460z" fill="#212830" />
      <path d="M2 458H19L25 460 32 467 34 475V507L32 515 25 524 14 527.700H2z" fill="#212830" />
      <rect x="2" y="483" width="489" height="23" fill="url(#steel)" />

      {/* upright */}
      <path d="M494 357H512V810H511V930H503V400H494z" fill="#383834" />
      <path d="M494 357H509V369H508V630H507V790H506V930H489V790H490V630H491V367H492V360H494z" fill="url(#post)" />
      <path d="M510 454H528V536.500H510z" fill="#20ff20" />
      <path d="M510 454h18v2h-18zM510 534.500h18v2h-18z" fill="#00b800" />
      <path d="M527.500 456V535" stroke="#12b512" />
      <rect x="528" y="489" width="33" height="12" fill="url(#steel)" />

      {/* drilled plate */}
      <rect x="716" y="165" width="213" height="493" fill="#20ff20" />
      <path d="M716 165.500H928.500V658" stroke="#12b512" fill="none" />
      {[174, 649].map((y) => plateEdgeX.map((x) => <ellipse key={`${x}-${y}`} cx={x + 0.5} cy={y} rx="3.500" ry="3" fill="#212830" />))}
      {plateY.map((y) => plateX.map((x) => <circle key={`${x}-${y}`} cx={x + 0.3} cy={y} r="3.600" fill="#212830" />))}

      {/* UCS icon */}
      <rect x="49" y="830" width="6" height="49" fill="#1fb81f" />
      <rect x="51" y="830" width="3" height="49" fill="#5dff5d" />
      <path d="M49 831l3-3 3 3z" fill="#12c812" />
      <rect x="54" y="876" width="47" height="3" fill="#ff6464" />
      <path d="M54 879h47v2H54zM101 876l2 3-2 2z" fill="#a01a1a" />
      <rect x="49" y="876" width="6" height="5" fill="#48b4ff" />
      <g className="font-['Roboto'] font-light text-[18px]">
        <text x="49" y="828" fill="#18a018">Y</text>
        <text x="97" y="876" fill="#e02020">X</text>
        <text x="49" y="877" fill="#1560f0">Z</text>
      </g>
    </svg>
  );
}

function ViewCube() {
  return (
    <div className="absolute right-[13px] top-20 w-[140px] flex flex-col items-center font-['Open_Sans',sans-serif]">
      <svg viewBox="0 0 140 64" className="w-[140px] h-16">
        <ellipse cx="70" cy="54" rx="60" ry="6" fill="none" stroke="#474b53" strokeWidth="1" />
        <path d="M1 53Q10 63 70 63T139 53L124 53Q112 60 70 60T16 53z" fill="#474b53" />
        <path d="M1 52.500h20M124 52.500h14M62 61.500h16" stroke="#c4c6ca" strokeWidth="1.500" strokeDasharray="6 2" />
        <rect x="45" y="0" width="51" height="51" fill="#aeb1b5" />
        <rect x="45.500" y=".5" width="50" height="50" fill="none" stroke="#c6c8cb" strokeDasharray="10 4" />
        <rect x="55" y="10" width="32" height="32" fill="#9a9ea3" />
        <text x="71" y="31" textAnchor="middle" fill="#4a5158" className="text-[12px] font-bold">TOP</text>
      </svg>
      <button className="mt-12 w-[68px] h-[18px] rounded-[4px] border border-[#7d808c] bg-[#9698a5] text-[#5f636c] text-[10px] leading-4 flex items-center justify-center gap-1.5">
        <span>Unnamed</span>
        <svg viewBox="0 0 8 5" className="w-2 h-[5px]" fill="#a9acb6" stroke="#c0c2cb"><path d="M.5.5h7L4 4.500z" /></svg>
      </button>
    </div>
  );
}

function NavBar() {
  const tool = 'w-6 h-6';
  return (
    <div className="absolute right-[3px] top-[234px] w-8 h-[213px] rounded-[4px] border border-[#6c7075] bg-[#575b61] flex flex-col items-center pt-[18px] text-[#3d4147]">
      <svg viewBox="0 0 8 8" className="absolute top-px right-px w-2 h-2" fill="#44484e" stroke="#696d73"><circle cx="4" cy="4" r="4" stroke="none" /><path d="M2.500 2.500l3 3M5.500 2.500l-3 3" /></svg>
      <button aria-label="Steering wheel">
        <svg viewBox="0 0 24 24" className={tool} fill="none" stroke="currentColor">
          <path d="M12 1.500h8q2 0 2 2V12a10.500 10.500 0 1 1-10-10.500z" />
          <circle cx="12" cy="12" r="5.500" />
          <path d="M8 16l-4 4M16 16l4 4M7 19.500q5 3 10 0" />
        </svg>
      </button>
      <Caret className="w-[5px] h-[3px] mt-1.5" />
      <span className="w-[26px] h-px bg-[#686b66] mt-1.5 mb-1" />
      <button aria-label="Pan">
        <svg viewBox="0 0 24 24" className={tool} fill="none" stroke="currentColor" strokeWidth="1.200" strokeLinejoin="round">
          <path d="M9 23q-3-3-5-8l-3-2q1-2 4 0l3 2L5 4q2-2 3 1l2 7V2q1.500-2 3 0v10l2-9q2-1 2.500 1L16 13l4-7q2-1 2 1l-3 9-2 7z" />
        </svg>
      </button>
      <button aria-label="Zoom extents" className="mt-1">
        <svg viewBox="0 0 24 24" className={tool} fill="none" stroke="currentColor" strokeWidth="1.300">
          <path d="M1 1l15 15M16 1L1 16M1 5V1h4M12 1h4v4M1 12v4h4" />
          <circle cx="16" cy="15" r="4.500" fill="#575b61" />
          <path d="M19.500 18.500L23 22" strokeWidth="3" />
        </svg>
      </button>
      <Caret className="w-[5px] h-[3px] mt-1.5" />
      <button aria-label="Orbit" className="mt-1">
        <svg viewBox="0 0 24 24" className={tool} fill="none" stroke="currentColor" strokeWidth="1.300">
          <path d="M10 22V6H8l3.500-5L15 6h-2v16z" />
          <path d="M10 10Q1 11 1 14t10 4q12-1 12-4t-9-4" />
          <path d="M3 17l5-4v8z" fill="currentColor" />
        </svg>
      </button>
      <Caret className="w-[5px] h-[3px] mt-1.5" />
      <span className="w-[26px] h-px bg-[#686b66] my-1" />
      <button aria-label="Show motion">
        <svg viewBox="0 0 24 24" className={tool} fill="none" stroke="currentColor" strokeWidth="1.300">
          <path d="M1 1h6v6H1zM9 1h6v6H9zM17 1h6v6h-6zM1 10h16v13H1z" />
          <path d="M6 13l6 4-6 4z" fill="currentColor" />
        </svg>
      </button>
      <svg viewBox="0 0 8 8" className="absolute bottom-px right-px w-2 h-2" fill="#44484e" stroke="#696d73"><circle cx="4" cy="4" r="4" stroke="none" /><path d="M2 3.500h4M3 5.500h2" /></svg>
    </div>
  );
}

function Viewport() {
  return (
    <main className="relative flex-1 min-h-0 overflow-hidden bg-[#212830] border-l-2 border-r-2 border-l-[#8e8e8e] border-r-[#e4e4e4]">
      <Model />
      <div className="relative flex justify-between items-start pl-1 pr-[10px] pt-1 text-[#e8e8e8] text-[12px]">
        <span>[−][Custom View][Shaded]</span>
        <div className="flex items-center gap-2.5 pt-[5px]">
          <button aria-label="Minimize drawing" className="h-2.5 flex items-end"><span className="w-[9px] h-[3px] bg-white" /></button>
          <button aria-label="Restore drawing">
            <svg viewBox="0 0 10 10" className="w-2.5 h-2.5" fill="none" stroke="#fff" strokeWidth="1.600"><path d="M3 2.500V1h6v6H7.500M1 3h6v6H1z" /></svg>
          </button>
          <button aria-label="Close drawing">
            <svg viewBox="0 0 10 10" className="w-2.5 h-2.5" stroke="#fff" strokeWidth="2.200"><path d="M1 1l8 8M9 1L1 9" /></svg>
          </button>
        </div>
      </div>
      <ViewCube />
      <NavBar />
    </main>
  );
}

/* ---------- bottom bars ---------- */

const navArrows = [
  ['First', 'M1 0v10M9 0v10L3 5z'],
  ['Previous', 'M8 0v10L2 5z'],
  ['Next', 'M2 0v10l6-5z'],
  ['Last', 'M9 0v10M1 0v10l6-5z'],
];

function LayoutTabs() {
  return (
    <div className="h-[17px] flex items-start bg-[#f0f0f0] border-t border-[#6d6d6d] border-l-2 border-l-[#8e8e8e] text-[11px]">
      {navArrows.map(([label, d]) => (
        <button key={label} aria-label={label} className="w-[15px] h-[15px] flex items-center justify-center border-r border-b border-[#9a9a9a]">
          <svg viewBox="0 0 10 10" className="w-2 h-2" fill="#5c5c5c" stroke="#5c5c5c" strokeWidth=".8"><path d={d} /></svg>
        </button>
      ))}
      <button className="h-[15px] w-[52px] bg-[#212830] text-white leading-[13px] [clip-path:polygon(0_0,100%_0,92%_100%,10%_100%)]">Model</button>
      {['Layout1', 'Layout2'].map((t) => (
        <button key={t} className="relative h-[15px] w-[55px] pr-1 leading-[13px] text-black border-b border-[#8a8a8a]">
          {t}
          <svg viewBox="0 0 6 15" className="absolute right-0 top-0 w-1.5 h-[15px]" stroke="#444" fill="none"><path d="M5.500 0L.5 15" /></svg>
        </button>
      ))}
    </div>
  );
}

function CommandLine() {
  return (
    <div className="flex h-[67px] bg-[#c8c8c8] border-t border-[#808080] border-b border-b-black font-['Liberation_Mono','DejaVu_Sans_Mono',monospace] text-[12px] text-black">
      <div className="w-[23px] shrink-0 flex flex-col items-center bg-gradient-to-b from-[#8a8a8a] to-[#3c3c3c] border-r border-[#777] pt-1">
        <svg viewBox="0 0 18 6" className="w-[18px] h-1.5" stroke="#b5b5b5" strokeWidth="2" strokeDasharray="2 1"><path d="M0 1h18M0 4.500h18" /></svg>
        <button aria-label="Close command line" className="mt-1">
          <svg viewBox="0 0 10 10" className="w-2.5 h-2.5" stroke="#f0f0f0" strokeWidth="2.200"><path d="M1 1l8 8M9 1L1 9" /></svg>
        </button>
        <button aria-label="Customize" className="mt-1.5">
          <svg viewBox="0 0 14 14" className="w-3.5 h-3.5" fill="#f0f0f0"><path d="M1 4l3 1 1-1-1-3q4-1 4.500 3L8 6l6 6-1.500 2L6 8Q1 9 1 4z" /></svg>
        </button>
      </div>
      <div className="flex-1 flex flex-col">
        <div className="h-[42px] pt-[11px] pl-0.5 leading-[15px] whitespace-pre border-b border-[#777]">
          <p>Command:</p>
          <p>Press ESC or ENTER to exit, or right-click to display shortcut-menu.</p>
        </div>
        <label className="flex-1 flex items-center bg-white pl-[5px]">
          <Icon className="w-4 h-4">
            <path d="M7 15V4H5.500L8 1l2.500 3H9v11z" />
            <path d="M7 6.500Q1 7 1 9t7 2.500Q15 11 15 9T9 6.500M2 11l3-2v5z" />
          </Icon>
          <Caret className="w-[5px] h-[3px] ml-1 text-[#888]" />
          <input aria-label="Command" defaultValue="3DORBIT" className="flex-1 ml-1.5 font-bold outline-none bg-transparent" />
        </label>
      </div>
    </div>
  );
}

function StatusBar() {
  return (
    <div className="h-[21px] flex items-center justify-between pl-[7px] bg-gradient-to-b from-[#969696] to-[#767676] border-t border-[#a5a5a5] font-['Roboto','Liberation_Sans',sans-serif] text-[11px] text-black">
      <span>Press ESC or ENTER to exit, or right-click to display shortcut-menu.</span>
      <svg viewBox="0 0 12 12" className="self-end w-3 h-3" fill="#e8e8e0"><path d="M9 1h2v2H9zM5 5h2v2H5zM9 5h2v2H9zM1 9h2v2H1zM5 9h2v2H5zM9 9h2v2H9z" /></svg>
    </div>
  );
}

const apps = [
  ['Explorer', (
    <g key="e" stroke="none">
      <path d="M3 6l2-3h6l1 2h6l1 2h8l1 3v18H2z" fill="#eacb6b" />
      <path d="M5 3h5v2H5z" fill="#23a023" />
      <path d="M12 5h5v2h-5z" fill="#d83a2a" />
      <path d="M19 7h6v2h-6z" fill="#3a8ad8" />
      <path d="M2 10h27l-1 18H3z" fill="#f8e59a" />
      <path d="M7 31V22q0-3 3-3h13q3 0 3 3v9h-4v-6H11v6z" fill="#8fcbea" stroke="#5a9fc8" />
      <path d="M7 14l1 4 4 1-4 1-1 5-1-5-4-1 4-1z" fill="#fff" />
    </g>
  )],
  ['Chrome', (
    <g key="c" stroke="none">
      <circle cx="16" cy="16" r="14" fill="#fccb0b" />
      <path d="M16 16L3.900 9A14 14 0 0 1 28.100 9z" fill="#dc3b2e" />
      <path d="M3.900 9A14 14 0 0 0 14.500 29.900L22 19 16 16 9.500 18z" fill="#3fa548" />
      <circle cx="16" cy="16" r="6.800" fill="#f4f4f4" />
      <circle cx="16" cy="16" r="5.300" fill="#2f78c9" />
    </g>
  )],
  ['Skype', (
    <g key="s" stroke="none">
      <path d="M9 1Q3 0 2 6q-1 3 1 6-1 13 11 15 3 0 5-1 9 3 10-6 0-3-1-4 1-12-10-14-3 0-5 0-2-1-4-1z" fill="#12a5e8" />
      <path d="M20 9q-5-3-8-1t0 5l5 2q4 2 2 5t-8 0" fill="none" stroke="#fff" strokeWidth="3.500" strokeLinecap="round" />
      <path d="M18 17q8-1 9 7l-6 2z" fill="#cde86a" />
      <circle cx="26" cy="26" r="5.500" fill="#f58a0a" />
      <text x="26" y="29.500" textAnchor="middle" fill="#222" className="text-[9px] font-bold">1</text>
    </g>
  )],
  ['Paint', (
    <g key="p" fill="none" strokeLinecap="round">
      <path d="M12 19L8 5" stroke="#3f86c8" strokeWidth="3" />
      <path d="M9 6L6 2" stroke="#8a4a24" strokeWidth="4" />
      <path d="M15 20V6" stroke="#f0b020" strokeWidth="3.500" />
      <path d="M19 20l5-16" stroke="#8a94c8" strokeWidth="3" />
      <path d="M20 21l6-12" stroke="#d8452a" strokeWidth="3" />
      <path d="M8 15h17l-3 15H11z" fill="#e4f2f4" fillOpacity=".7" stroke="#9fb8bc" />
      <path d="M13 27l-1-10" stroke="#2c9a3a" strokeWidth="3" />
      <path d="M17 27V17" stroke="#e88a1a" strokeWidth="2" />
      <path d="M20 26l1-9" stroke="#c83a2a" strokeWidth="2" />
    </g>
  )],
  ['AutoCAD', (
    <g key="a" stroke="none">
      <path d="M1 4h30v28H1z" fill="#161616" />
      <path d="M1 24h30v8H1z" fill="#d40808" />
      <path d="M20 5h11v18h-9z" fill="#3c3c3c" />
      <path d="M22 7l3 3M27 6l2 5M24 12l5 5M28 13l2 2M24 18l3-3" stroke="#aaa" />
      <path d="M4 25L12 2h5l6 17-4 2-3-4-5 1-2 7z" fill="#e6e6e6" stroke="#777" />
      <path d="M11 13l3-7 1 6z" fill="#222" />
    </g>
  )],
];

function Taskbar() {
  return (
    <footer className="h-10 flex items-stretch border-t border-[#4a5868] bg-[#a6bfdc] text-[11px] text-white">
      <div className="w-[60px] flex items-center pl-2 bg-[#8297ae]">
        <button aria-label="Start">
          <svg viewBox="0 0 36 36" className="w-9 h-9">
            <defs>
              <radialGradient id="orb" cx=".5" cy=".9" r=".9">
                <stop offset="0" stopColor="#3fd6f8" />
                <stop offset=".45" stopColor="#1b6ea8" />
                <stop offset="1" stopColor="#16406e" />
              </radialGradient>
            </defs>
            <circle cx="18" cy="18" r="17" fill="url(#orb)" stroke="#2c4a6a" />
            <path d="M3 14A15.500 15.500 0 0 1 33 14Q18 20 3 14z" fill="#fff" fillOpacity=".25" />
            <path d="M9 10q4-3 8-1l-2 8q-4-2-8 1z" fill="#ee5a24" />
            <path d="M19 10q4 2 8-1l-2 8q-4 3-8 1z" fill="#8cc63e" />
            <path d="M7 20q4-3 8-1l-2 8q-4-2-8 1z" fill="#3c9ae0" />
            <path d="M17 20q4 2 8-1l-2 8q-4 3-8 1z" fill="#fbc52c" />
          </svg>
        </button>
      </div>
      <div className="flex gap-1 pb-px">
        {apps.map(([name, art]) => (
          <button
            key={name}
            aria-label={name}
            className={`w-[58px] flex items-center justify-center rounded-sm border border-[#5b6d84] shadow-[inset_0_0_0_1px_#e3edf8] ${name === 'AutoCAD' ? 'bg-gradient-to-b from-[#f0c8cc] to-[#e08a8a]' : 'bg-gradient-to-b from-[#c8d6e8] to-[#a9bedb]'}`}
          >
            <Icon box={32} className="w-8 h-8">{art}</Icon>
          </button>
        ))}
      </div>
      <div className="flex-1" />
      <div className="flex items-center bg-gradient-to-r from-[#a6bfdc] to-[#8397ae] to-10% pl-12">
        <span className="pb-1 mr-[7px]">SK</span>
        <Icon><path d="M1 6h14v8H1z" fill="#d0d0cc" stroke="#6e6e6e" /><path d="M3 8h10M3 10h10M4 12h8" stroke="#6e6e6e" strokeDasharray="1 1" /><path d="M5 5q3-4 5-2t4-2" stroke="#6e6e6e" /></Icon>
        <svg viewBox="0 0 9 5" className="w-[9px] h-[5px] mx-3" fill="#fff" stroke="#4a5868" strokeWidth=".5"><path d="M0 5l4.500-5L9 5z" /></svg>
        <div className="flex items-center gap-2">
          <Icon>
            <path d="M5 .5h10.500V10q0 5.500-5.500 5.500H.5V5Q.5.500 5 .5z" fill="#178a3c" stroke="#0c5f50" />
            <circle cx="8" cy="8" r="5" fill="#fff" stroke="#8fd03a" />
            <circle cx="8" cy="8" r="2.500" fill="#7ec31c" stroke="#3f8a10" />
          </Icon>
          <Icon>
            <path d="M1 1h4q2 2 6 2l2 6-7 4Q1 8 1 1z" fill="#b4dc1e" stroke="#f4f8d0" />
            <circle cx="10" cy="10.500" r="5" fill="#f98a0a" stroke="#fff" />
            <text x="10" y="13.500" textAnchor="middle" fill="#222" stroke="none" className="text-[8px] font-bold">1</text>
          </Icon>
          <Icon>
            <path d="M1 5h3l4-4v14l-4-4H1z" fill="#fff" stroke="#4a5868" />
            <path d="M10 5q2 3 0 6M12 3.500q3 4.500 0 9M14 2.500q3.500 5.500 0 11" stroke="#fff" />
          </Icon>
          <Icon>
            <path d="M5 3h10v9H5z" fill="#5e7187" stroke="#fff" strokeWidth="1.600" />
            <path d="M7 14.500h7" stroke="#fff" strokeWidth="2" />
            <path d="M1 1v3q0 2 2 2t2-2V1M3 6v7h3" stroke="#fff" strokeWidth="1.500" />
          </Icon>
          <Icon>
            <path d="M2 1v14.500" stroke="#fff" strokeWidth="2" />
            <path d="M3 2q3-1 6 0v2q3 1 6 1-2 5-6 4V8q-3-1-6 0z" fill="#fff" stroke="#4a5868" strokeWidth=".6" />
          </Icon>
        </div>
        <div className="w-[79px] text-center leading-[17px] pl-1">
          <p>21:45</p>
          <p>1. 3. 2013</p>
        </div>
        <button aria-label="Show desktop" className="w-[14px] h-full border border-[#3f4d5e] bg-gradient-to-br from-[#a9b8c8] via-[#5e7085] to-[#8a9bae]" />
      </div>
    </footer>
  );
}

export default function App() {
  return (
    <div className="h-screen min-h-[600px] overflow-hidden flex flex-col bg-[#696969] font-['Noto_Sans','Open_Sans',sans-serif]">
      <header className="relative shrink-0">
        <TitleBar />
        <TabBar />
        <button aria-label="Application menu" className="absolute left-0 top-0 w-[41px] h-[41px] flex items-center gap-[3px] pl-1 border border-[#222] bg-gradient-to-b from-[#c4c4c4] to-[#5c5c5c]">
          <svg viewBox="0 0 24 32" className="w-6 h-8">
            <path d="M1 28L8 4l8-3 7 23-6 3-2-6-7 2-2 6z" fill="#cf1d25" />
            <path d="M12 3l4-2 7 23-3 1z" fill="#7d1015" />
            <path d="M9.500 17l2.500-8 3 6z" fill="#f4d8d8" />
            <path d="M1 28l5-1 2-5 7-1 2 5" fill="none" stroke="#8a0f14" strokeWidth="1.500" />
            <path d="M8 4l4-1-7 19-4 6z" fill="#f2777b" fillOpacity=".7" />
          </svg>
          <Caret className="w-[7px] h-1 text-[#222]" />
        </button>
        <Ribbon />
        <div className="h-[7px] bg-[#696969] border-t border-[#555] border-b border-b-[#a0a0a0]" />
      </header>
      <Viewport />
      <div className="shrink-0">
        <LayoutTabs />
        <div className="h-[5px] bg-[#696969]" />
        <CommandLine />
        <StatusBar />
        <Taskbar />
      </div>
    </div>
  );
}
